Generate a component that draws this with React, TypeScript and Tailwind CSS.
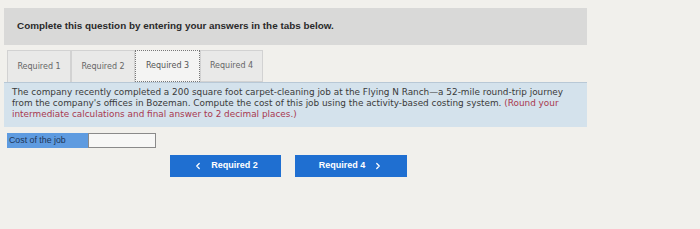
import { ChevronLeft, ChevronRight } from "lucide-react";

const tabs = ["Required 1", "Required 2", "Required 3", "Required 4"];

export default function App() {
  return (
    <div className="w-[700px] h-[229px] bg-[#f1f0ec] overflow-hidden">
      <div className="ml-[4px] w-[583px] pt-[8px]">
        <div className="h-[37px] bg-[#d9d9d8] flex items-center pl-[13px]">
          <p className="text-[9.9px] font-bold text-[#2a2a2a] font-['Liberation_Sans',Arial,sans-serif]">
            Complete this question by entering your answers in the tabs below.
          </p>
        </div>

        <div className="mt-[5px] ml-[3px] flex h-[32px]">
          {tabs.map((t, i) => (
            <div
              key={t}
              className={
                i === 2
                  ? "w-[65px] flex items-center justify-center border border-dotted border-[#777] bg-[#f4f4f3] text-[8px] text-[#555] font-['DejaVu_Sans',Verdana,sans-serif]"
                  : i === 3
                  ? "w-[63px] flex items-center justify-center border border-[#d2d2d2] bg-[#e9e9e8] text-[8px] text-[#666] font-['DejaVu_Sans',Verdana,sans-serif]"
                  : "w-[64px] flex items-center justify-center border-r border-t border-l border-[#d2d2d2] bg-[#e9e9e8] text-[8px] text-[#666] font-['DejaVu_Sans',Verdana,sans-serif]"
              }
            >
              {t}
            </div>
          ))}
        </div>

        <div className="h-[45px] bg-[#d4e2ec] border-t border-[#b8c8d6] pl-[8px] pt-[4px] text-[8.9px] leading-[11px] text-[#3a3a3a] font-['DejaVu_Sans',Verdana,sans-serif]">
          The company recently completed a 200 square foot carpet-cleaning job at the Flying N Ranch—a 52-mile round-trip journey
          <br />
          from the company's offices in Bozeman. Compute the cost of this job using the activity-based costing system.{" "}
          <span className="text-[#a8384f]">(Round your</span>
          <br />
          <span className="text-[#a8384f]">intermediate calculations and final answer to 2 decimal places.)</span>
        </div>

        <div className="mt-[6px] ml-[3px] flex h-[15px]">
          <div className="w-[81px] bg-[#5e9be0] flex items-center pl-[2px] text-[8.8px] text-[#1d3557] font-['Liberation_Sans',Arial,sans-serif]">
            Cost of the job
          </div>
          <div className="w-[68px] bg-[#f7f7f6] border border-[#8a8a8a]" />
        </div>

        <div className="mt-[7px] ml-[166px] flex gap-[14px]">
          <button className="w-[111px] h-[22px] bg-[#1f6fd1] flex items-center justify-center gap-[8px] text-white text-[9px] font-bold font-['Liberation_Sans',Arial,sans-serif]">
            <ChevronLeft size={10} strokeWidth={3} />
            Required 2
          </button>
          <button className="w-[112px] h-[22px] bg-[#1f6fd1] flex items-center justify-center gap-[8px] text-white text-[9px] font-bold font-['Liberation_Sans',Arial,sans-serif]">
            Required 4
            <ChevronRight size={10} strokeWidth={3} />
          </button>
        </div>
      </div>
    </div>
  );
}
